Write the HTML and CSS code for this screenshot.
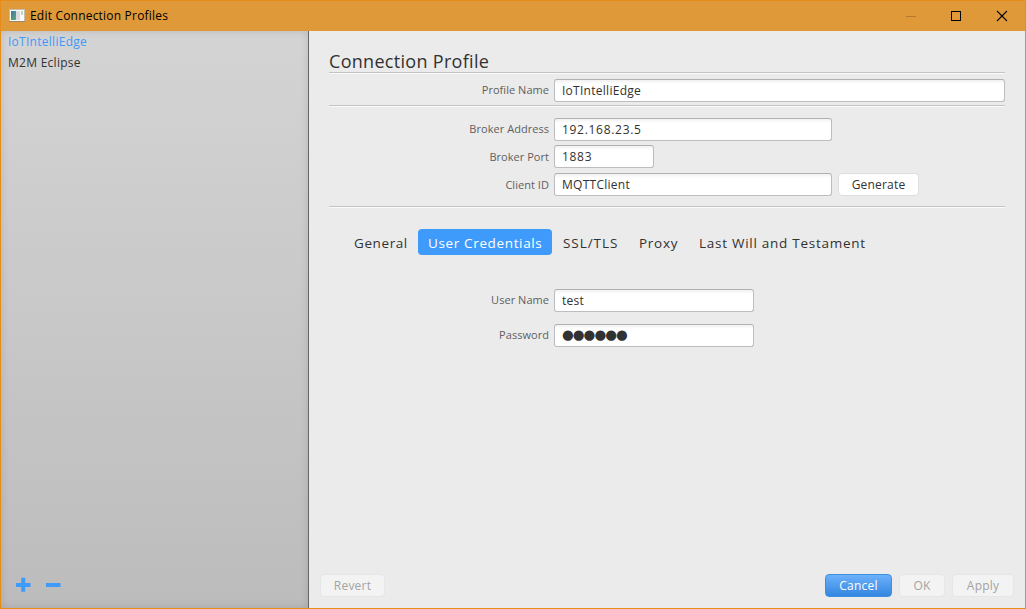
FILE: index.html
```html
<!DOCTYPE html>
<html lang="en">
<head>
<meta charset="utf-8">
<title>Edit Connection Profiles</title>
<link rel="stylesheet" href="styles.css">
</head>
<body>
<div class="window">
  <header class="titlebar">
    <svg class="app-icon" width="16" height="14" viewBox="0 0 16 14">
      <defs><linearGradient id="pane" x1="0" y1="0" x2="1" y2="1"><stop offset="0" stop-color="#4573aa"/><stop offset="1" stop-color="#58ae70"/></linearGradient></defs>
      <rect x=".5" y=".5" width="15" height="12" fill="#fafafa" stroke="#c4bdb0"/>
      <rect x="2" y="2" width="5" height="9" fill="url(#pane)"/>
      <rect x="7" y="2" width="4" height="9" fill="#dcdcdf"/>
      <rect x="12" y="2" width="2" height="4" fill="#b5d9c4"/>
      <path d="M0 12.500h16" stroke="#9a846a"/>
    </svg>
    <span class="title">Edit Connection Profiles</span>
    <svg class="controls" width="103" height="12" viewBox="0 0 103 12" fill="none" stroke="#000">
      <path d="M0 6.500h10" stroke="#b37a2e"/>
      <rect x="45.500" y="1.500" width="9" height="9"/>
      <path d="M91 1l10 10M101 1l-10 10" stroke-width="1.100"/>
    </svg>
  </header>
  <div class="body">
    <aside class="sidebar">
      <ul class="profiles">
        <li class="selected">IoTIntelliEdge</li>
        <li>M2M Eclipse</li>
      </ul>
      <svg class="tools" width="46" height="15" viewBox="0 0 46 15" stroke="#3f9bfb" stroke-width="4">
        <path d="M0 8h14.500M7.200 .8v14M30 8h14.500"/>
      </svg>
    </aside>
    <main class="content">
      <h1>Connection Profile</h1>
      <hr>
      <div class="row name"><label>Profile Name</label><div class="field wide">IoTIntelliEdge</div></div>
      <hr>
      <div class="row address"><label>Broker Address</label><div class="field ip">192.168.23.5</div></div>
      <div class="row port"><label class="low">Broker Port</label><div class="field short ip">1883</div></div>
      <div class="row client"><label class="low">Client ID</label><div class="field">MQTTClient</div><button class="generate">Generate</button></div>
      <hr>
      <nav class="tabs">
        <span class="t-general">General</span>
        <span class="active">User Credentials</span>
        <span class="t-ssl">SSL/TLS</span>
        <span class="t-proxy">Proxy</span>
        <span class="t-will">Last Will and Testament</span>
      </nav>
      <div class="row user"><label>User Name</label><div class="field medium">test</div></div>
      <div class="row"><label>Password</label><div class="field medium dots">●●●●●●</div></div>
      <footer class="footer">
        <button class="revert" disabled>Revert</button>
        <button class="cancel">Cancel</button>
        <button class="ok" disabled>OK</button>
        <button class="apply" disabled>Apply</button>
      </footer>
    </main>
  </div>
</div>
</body>
</html>
```

FILE: styles.css
```css
* { box-sizing: border-box; }
body {
  margin: 0;
  font: 12px/20px "Open Sans", "Noto Sans", sans-serif;
  letter-spacing: .27px;
  color: #323232;
}
.window {
  display: flex;
  flex-direction: column;
  width: 1026px;
  height: 609px;
  border: 1px solid #e58c19;
  background: #ebebeb;
}
.titlebar {
  display: flex;
  align-items: center;
  height: 30px;
  padding: 0 16px 0 8px;
  background: #df9939;
  color: #000;
}
.title { margin-left: 5px; letter-spacing: .2px; }
.controls { margin-left: auto; }
.app-icon { margin-bottom: 1px; }
.body { display: flex; flex: 1; min-height: 0; }
.sidebar {
  display: flex;
  flex-direction: column;
  justify-content: space-between;
  width: 308px;
  border-right: 1px solid #666;
  background: linear-gradient(#d4d4d4, #bcbcbc);
  box-shadow: inset 0 0 8px rgba(0, 0, 0, .13);
}
.profiles { list-style: none; margin: 0; padding: 0 7px; line-height: 21px; }
.profiles .selected { color: #3f99f9; }
.tools { margin: 0 0 16px 15px; }
.content {
  display: flex;
  flex-direction: column;
  flex: 1;
  padding: 0 20px;
}
h1 {
  height: 41px;
  margin: 0;
  padding-top: 17px;
  font-size: 18px;
  line-height: 26px;
  font-weight: 400;
  letter-spacing: .3px;
}
hr {
  width: 676px;
  height: 2px;
  margin: 0;
  border: 0;
  flex: none;
  background: linear-gradient(#c3c3c3 50%, #fafafa 50%);
}
.row { display: flex; align-items: center; height: 23px; flex: none; }
label {
  width: 220px;
  margin-right: 5px;
  padding-bottom: 1px;
  color: #5f5f5f;
  font-size: 11px;
  letter-spacing: .04px;
  text-align: right;
}
.low { padding: 1px 0 0; }
.field {
  width: 278px;
  height: 23px;
  padding: 0 7px;
  border: 1px solid #bdbdbd;
  border-top-color: #b1b1b1;
  border-radius: 3px;
  background: linear-gradient(#f1f1f1, #fff 4px);
  line-height: 22px;
}
.ip { letter-spacing: .7px; }
.wide { width: 451px; }
.short { width: 100px; }
.medium { width: 200px; }
.dots { font-family: "DejaVu Sans", sans-serif; font-size: 13.5px; line-height: 18px; letter-spacing: -.98px; }
.name { margin: 5px 0 3px; }
.address { margin: 11px 0 4px; }
.port { margin-bottom: 5px; }
.client { margin-bottom: 10px; }
button {
  height: 23px;
  padding: 0;
  border: 1px solid #dedede;
  border-radius: 4px;
  background: #fff;
  color: #323232;
  font: inherit;
  letter-spacing: .2px;
}
button:disabled { border-color: #e6e6e6; background: #f3f3f3; color: #a3a3a3; }
.generate { width: 81px; margin-left: 6px; }
.tabs {
  display: flex;
  align-items: flex-start;
  height: 26px;
  margin-top: 21px;
  padding-left: 25px;
  font-size: 13.5px;
  letter-spacing: .73px;
  white-space: nowrap;
}
.tabs span { line-height: 28px; }
.tabs .t-general { width: 64px; letter-spacing: .6px; }
.tabs .active {
  width: 134px;
  height: 26px;
  padding-left: 10px;
  margin-right: 11px;
  border-radius: 4px;
  background: #3f9bfb;
  color: #fff;
  letter-spacing: .64px;
}
.tabs .t-ssl { width: 76px; letter-spacing: .95px; }
.t-proxy { width: 60px; }
.user { margin: 34px 0 12px; }
.footer { display: flex; margin: auto -9px 11px; }
.revert { width: 65px; }
.cancel {
  width: 67px;
  margin-left: auto;
  border-color: #3f8fe0;
  background: linear-gradient(#6cb1fb, #3486e0);
  color: #fff;
}
.ok { width: 46px; margin: 0 7px; }
.apply { width: 62px; }
```
